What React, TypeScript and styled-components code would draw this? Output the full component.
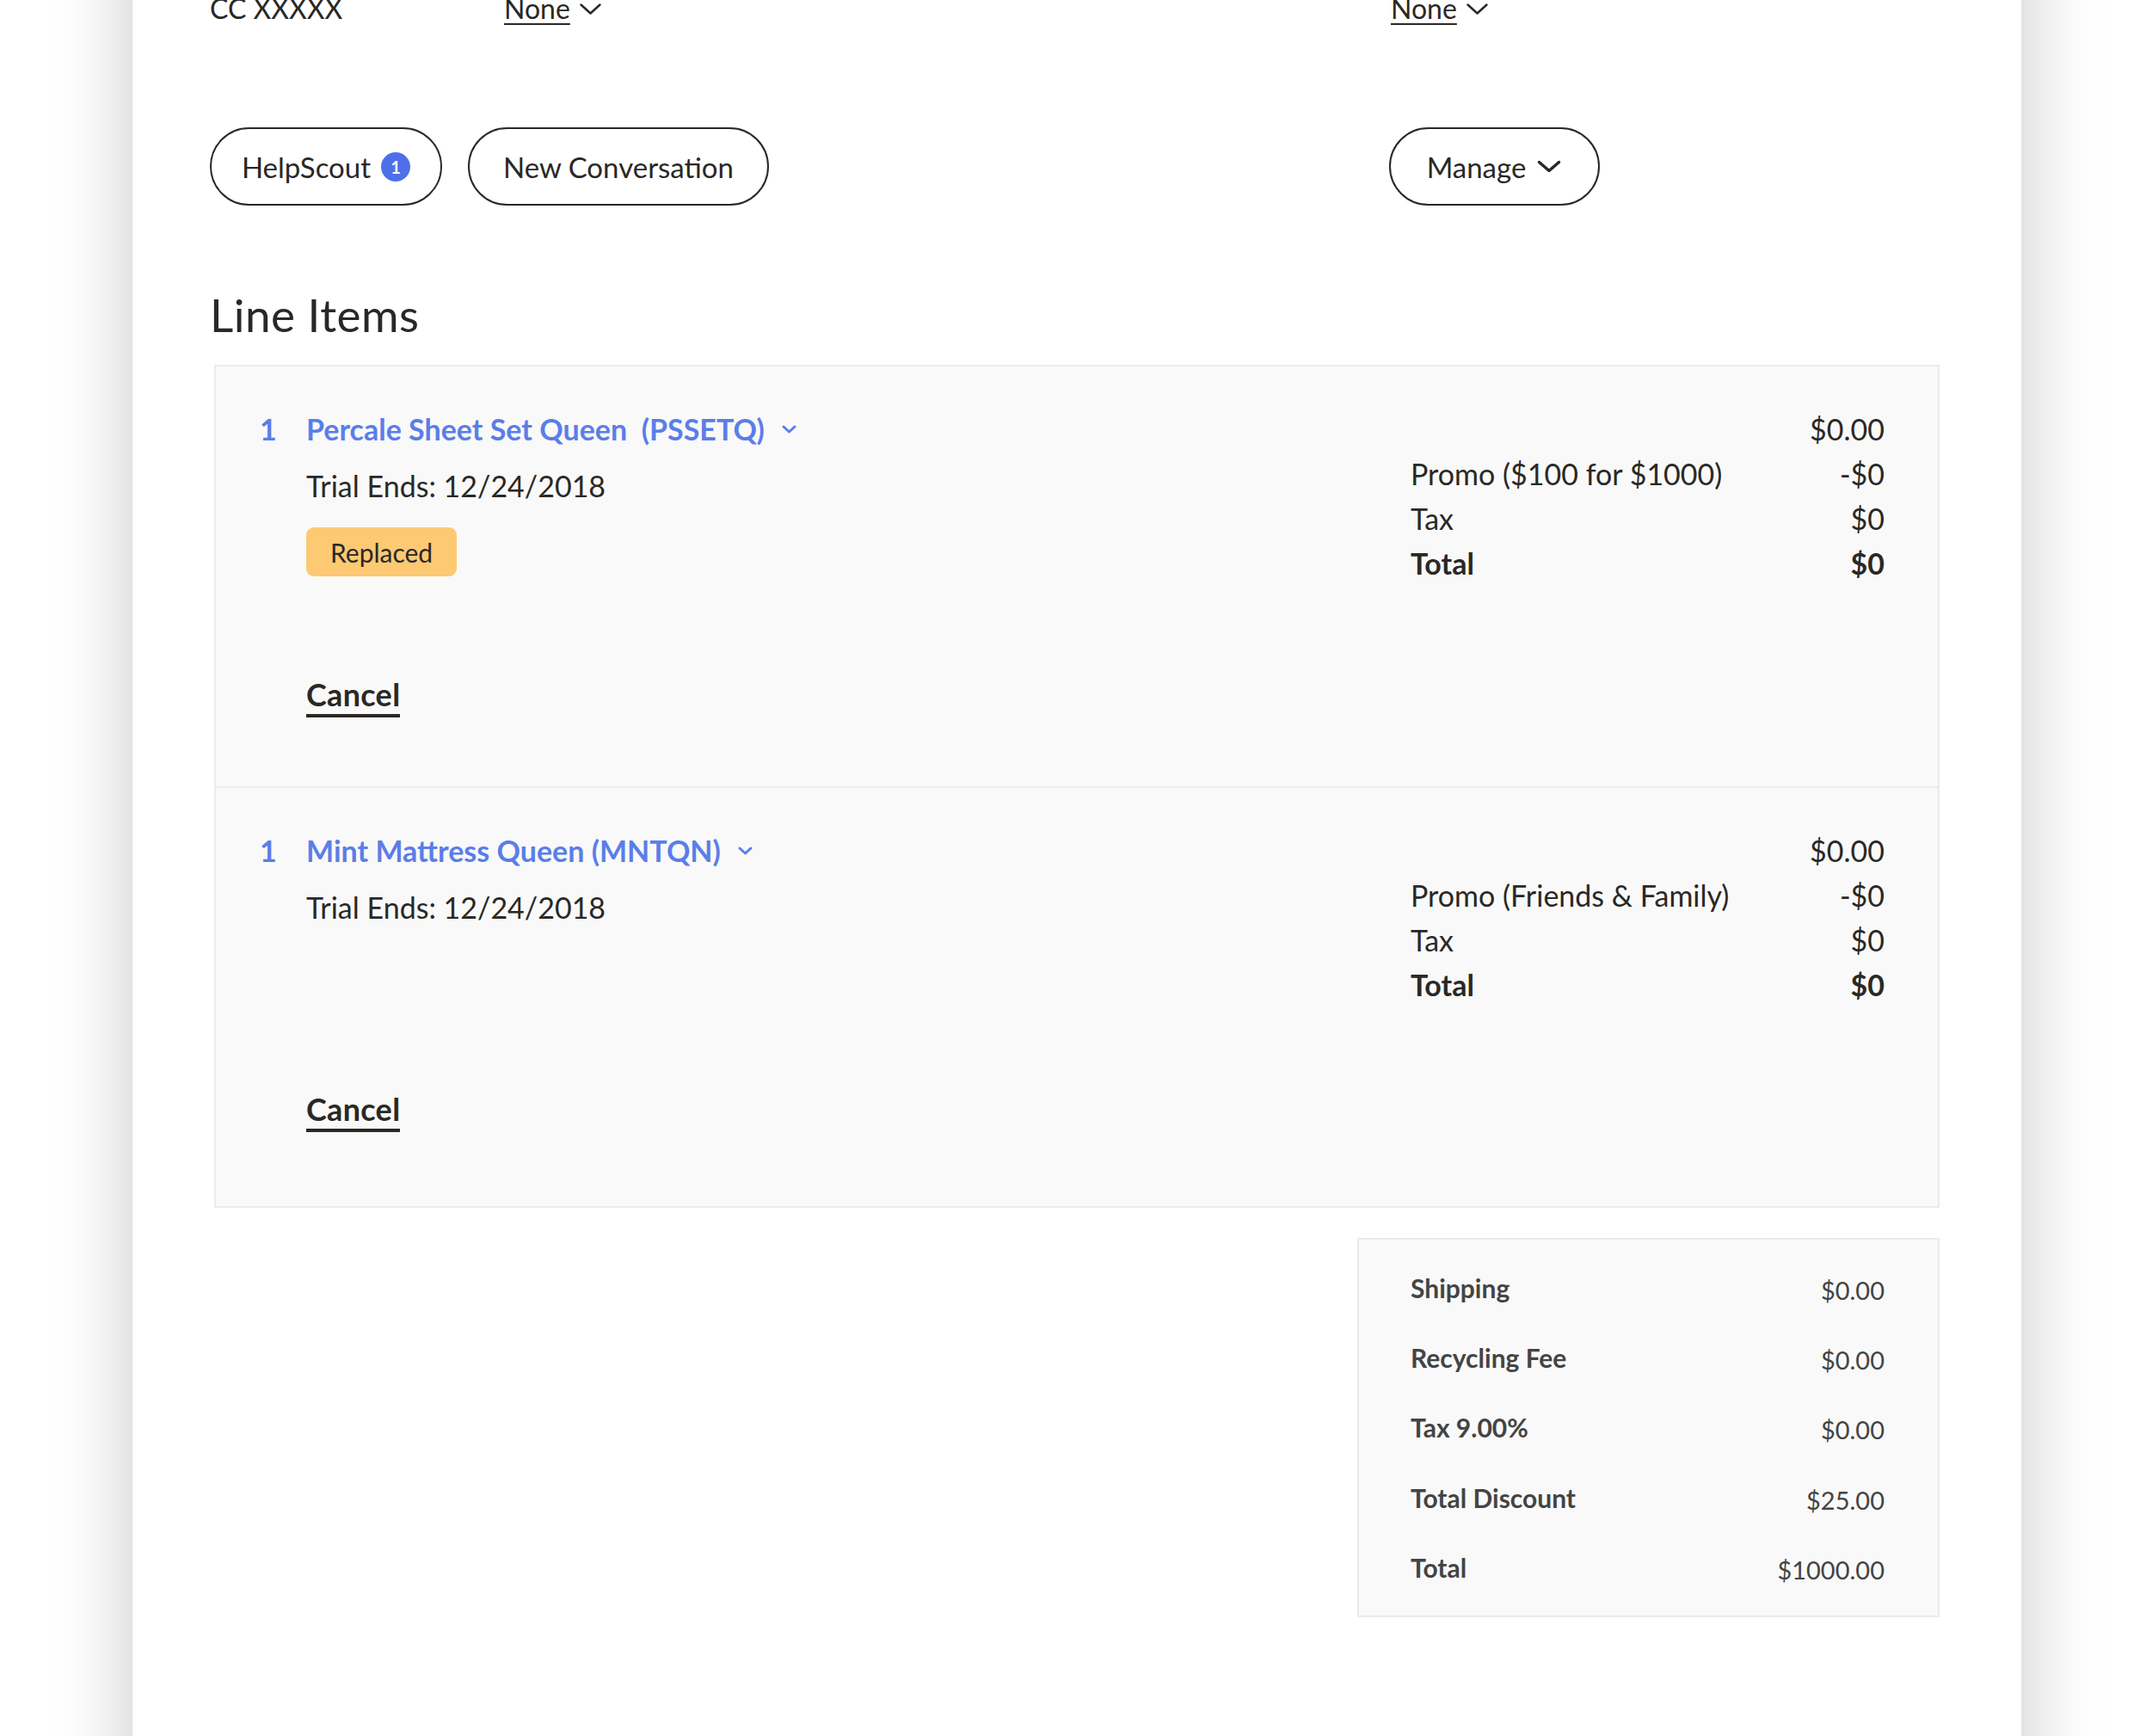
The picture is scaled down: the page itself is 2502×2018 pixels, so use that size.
import React from "react";
import styled, { createGlobalStyle } from "styled-components";

const GlobalStyle = createGlobalStyle`
  html, body { margin: 0; padding: 0; background: #ffffff; }
  body {
    font-family: Lato, "Liberation Sans", sans-serif;
    color: #2a2825;
    overflow: hidden;
  }
  * { box-sizing: border-box; }
`;

const Page = styled.div`
  width: 2502px;
  height: 2018px;
  overflow: hidden;
  background: #ffffff;
  display: flow-root;
`;

const Card = styled.main`
  display: flow-root;
  margin: -100px 0 0 154px;
  width: 2196px;
  min-height: 2300px;
  padding: 90px 95px 0 90px;
  background: #ffffff;
  box-shadow: 0 0 90px rgba(0, 0, 0, 0.22);
`;

const TopRow = styled.div`
  display: grid;
  grid-template-columns: 342px 1031px 1fr;
  height: 40px;
  font-size: 32px;
  line-height: 40px;
`;

const Dropdown = styled.span`
  display: inline-flex;
  align-items: center;
  gap: 10px;
`;

const DropdownText = styled.span`
  text-decoration: underline;
  text-decoration-thickness: 2px;
  text-underline-offset: 5px;
`;

const ActionRow = styled.div`
  display: grid;
  grid-template-columns: 1371px auto;
  margin-top: 118px;
`;

const ActionGroup = styled.div`
  display: flex;
  gap: 30px;
`;

const Pill = styled.button<{ $w: number }>`
  width: ${(p) => p.$w}px;
  height: 91px;
  border: 2px solid #2a2825;
  border-radius: 46px;
  background: #ffffff;
  color: #2a2825;
  font-family: inherit;
  font-size: 33px;
  display: inline-flex;
  align-items: center;
  justify-content: center;
  gap: 12px;
  padding: 0;
  cursor: pointer;
`;

const CountBadge = styled.span`
  width: 34px;
  height: 34px;
  border-radius: 50%;
  background: #4f6fe9;
  color: #ffffff;
  font-size: 20px;
  font-weight: 700;
  display: inline-flex;
  align-items: center;
  justify-content: center;
`;

const Heading = styled.h2`
  margin: 97px 0 0;
  font-size: 53px;
  line-height: 60px;
  font-weight: 400;
  letter-spacing: 0.5px;
  color: #2a2825;
`;

const ItemsBox = styled.section`
  margin: 28px 0 0 5px;
  border: 2px solid #ebebeb;
  background: #f9f9f9;
`;

const Item = styled.div`
  display: grid;
  grid-template-columns: 54px 1fr 551px;
  height: 488px;
  padding: 51px 62px 0 51px;
  & + & {
    border-top: 2px solid #ebebeb;
  }
`;

const Qty = styled.div`
  font-size: 34px;
  line-height: 44px;
  font-weight: 700;
  color: #5a7ee9;
`;

const ItemMain = styled.div<{ $tail: number }>`
  display: flex;
  flex-direction: column;
  align-items: flex-start;
  padding-bottom: ${(p) => p.$tail}px;
`;

const Title = styled.a`
  display: inline-flex;
  align-items: center;
  gap: 19px;
  font-size: 34px;
  line-height: 44px;
  font-weight: 700;
  color: #5a7ee9;
  white-space: pre;
  text-decoration: none;
`;

const Trial = styled.div`
  margin-top: 22px;
  font-size: 34px;
  line-height: 44px;
`;

const StatusTag = styled.span`
  margin-top: 26px;
  height: 57px;
  padding: 0 28px;
  border-radius: 9px;
  background: #fdc973;
  font-size: 30px;
  display: inline-flex;
  align-items: center;
  color: #2a2825;
`;

const CancelLink = styled.a`
  margin-top: auto;
  font-size: 36px;
  line-height: 44px;
  font-weight: 700;
  letter-spacing: 0.3px;
  color: #2a2825;
  text-decoration: none;
  padding-bottom: 1px;
  border-bottom: 4px solid #2a2825;
`;

const PriceTable = styled.div`
  display: grid;
  grid-template-columns: 1fr auto;
  align-content: start;
  margin-top: -4px;
  font-size: 34px;
  line-height: 52px;
`;

const PriceCell = styled.span<{ $bold?: boolean; $right?: boolean }>`
  font-weight: ${(p) => (p.$bold ? 700 : 400)};
  text-align: ${(p) => (p.$right ? "right" : "left")};
`;

const Summary = styled.section`
  width: 677px;
  margin: 35px 0 0 auto;
  border: 2px solid #ebebeb;
  background: #f9f9f9;
  padding: 15px 62px 15px 60px;
  color: #444444;
`;

const SummaryRow = styled.div`
  height: 81.4px;
  display: flex;
  align-items: center;
  justify-content: space-between;
`;

const SummaryLabel = styled.span`
  font-size: 30px;
  font-weight: 700;
`;

const SummaryValue = styled.span`
  font-size: 29px;
  padding-top: 5px;
`;

const Chevron = ({ w, h, sw, color }: { w: number; h: number; sw: number; color: string }) => (
  <svg width={w} height={h} viewBox={`0 0 ${w} ${h}`} fill="none">
    <path
      d={`M${sw} ${sw} L${w / 2} ${h - sw} L${w - sw} ${sw}`}
      stroke={color}
      strokeWidth={sw}
      strokeLinecap="round"
      strokeLinejoin="round"
    />
  </svg>
);

type Line = { label: string; value: string; bold?: boolean };

const items = [
  {
    qty: "1",
    title: "Percale Sheet Set Queen\u00a0 (PSSETQ)",
    trial: "Trial Ends: 12/24/2018",
    tag: "Replaced",
    tail: 80,
    lines: [
      { label: "", value: "$0.00" },
      { label: "Promo ($100 for $1000)", value: "-$0" },
      { label: "Tax", value: "$0" },
      { label: "Total", value: "$0", bold: true },
    ] as Line[],
  },
  {
    qty: "1",
    title: "Mint Mattress Queen (MNTQN)",
    trial: "Trial Ends: 12/24/2018",
    tag: "",
    tail: 86,
    lines: [
      { label: "", value: "$0.00" },
      { label: "Promo (Friends & Family)", value: "-$0" },
      { label: "Tax", value: "$0" },
      { label: "Total", value: "$0", bold: true },
    ] as Line[],
  },
];

const summary = [
  ["Shipping", "$0.00"],
  ["Recycling Fee", "$0.00"],
  ["Tax 9.00%", "$0.00"],
  ["Total Discount", "$25.00"],
  ["Total", "$1000.00"],
];

export default function App() {
  return (
    <Page>
      <GlobalStyle />
      <Card>
        <TopRow>
          <span>CC XXXXX</span>
          <Dropdown>
            <DropdownText>None</DropdownText>
            <Chevron w={27} h={15} sw={2.5} color="#2a2825" />
          </Dropdown>
          <Dropdown>
            <DropdownText>None</DropdownText>
            <Chevron w={27} h={15} sw={2.5} color="#2a2825" />
          </Dropdown>
        </TopRow>

        <ActionRow>
          <ActionGroup>
            <Pill $w={270}>
              HelpScout
              <CountBadge>1</CountBadge>
            </Pill>
            <Pill $w={350}>New Conversation</Pill>
          </ActionGroup>
          <Pill $w={245}>
            Manage
            <Chevron w={30} h={17} sw={3.5} color="#2a2825" />
          </Pill>
        </ActionRow>

        <Heading>Line Items</Heading>

        <ItemsBox>
          {items.map((it, i) => (
            <Item key={i}>
              <Qty>{it.qty}</Qty>
              <ItemMain $tail={it.tail}>
                <Title href="#">
                  {it.title}
                  <Chevron w={19} h={12} sw={3} color="#5a7ee9" />
                </Title>
                <Trial>{it.trial}</Trial>
                {it.tag && <StatusTag>{it.tag}</StatusTag>}
                <CancelLink href="#">Cancel</CancelLink>
              </ItemMain>
              <PriceTable>
                {it.lines.map((l, j) => (
                  <React.Fragment key={j}>
                    <PriceCell $bold={l.bold}>{l.label}</PriceCell>
                    <PriceCell $bold={l.bold} $right>
                      {l.value}
                    </PriceCell>
                  </React.Fragment>
                ))}
              </PriceTable>
            </Item>
          ))}
        </ItemsBox>

        <Summary>
          {summary.map(([label, value]) => (
            <SummaryRow key={label}>
              <SummaryLabel>{label}</SummaryLabel>
              <SummaryValue>{value}</SummaryValue>
            </SummaryRow>
          ))}
        </Summary>
      </Card>
    </Page>
  );
}
